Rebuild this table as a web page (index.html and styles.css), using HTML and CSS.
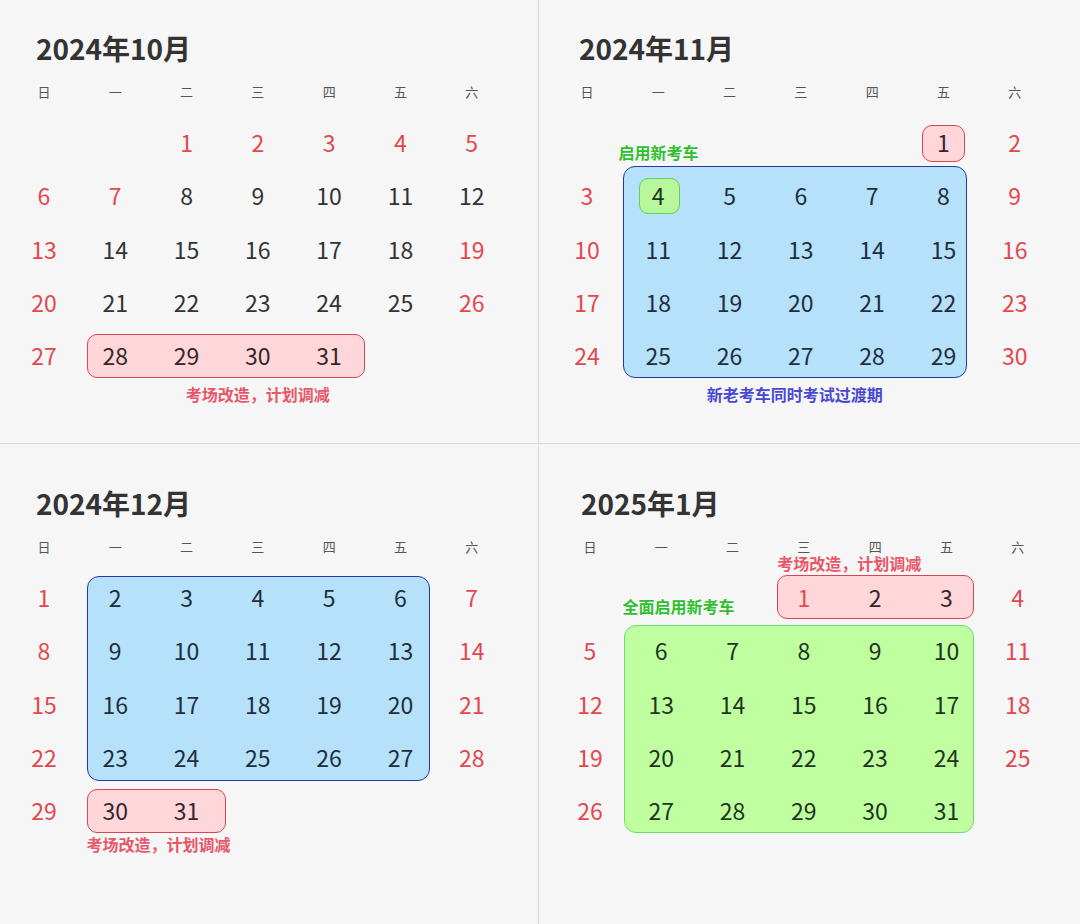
FILE: index.html
```html
<!DOCTYPE html>
<html lang="zh-CN">
<head>
<meta charset="utf-8">
<title>考试日历</title>
<link rel="stylesheet" href="styles.css">
</head>
<body>
<div class="board">
  <section class="month tl left top">
    <h2 class="title">2024年10月</h2>
    <div class="cal">
      <span class="wd">日</span><span class="wd">一</span><span class="wd">二</span><span class="wd">三</span><span class="wd">四</span><span class="wd">五</span><span class="wd">六</span>
      <span class="d r c3">1</span><span class="d r">2</span><span class="d r">3</span><span class="d r">4</span><span class="d r">5</span>
      <span class="d r">6</span><span class="d r">7</span><span class="d">8</span><span class="d">9</span><span class="d">10</span><span class="d">11</span><span class="d">12</span>
      <span class="d r">13</span><span class="d">14</span><span class="d">15</span><span class="d">16</span><span class="d">17</span><span class="d">18</span><span class="d r">19</span>
      <span class="d r">20</span><span class="d">21</span><span class="d">22</span><span class="d">23</span><span class="d">24</span><span class="d">25</span><span class="d r">26</span>
      <span class="d r">27</span><span class="d p">28</span><span class="d p">29</span><span class="d p">30</span><span class="d p">31</span>
      <div class="hl pink oct-cut"></div>
      <div class="note n-pink oct-note">考场改造，计划调减</div>
    </div>
  </section>

  <section class="month tr top">
    <h2 class="title">2024年11月</h2>
    <div class="cal">
      <span class="wd">日</span><span class="wd">一</span><span class="wd">二</span><span class="wd">三</span><span class="wd">四</span><span class="wd">五</span><span class="wd">六</span>
      <span class="d p c6">1</span><span class="d r">2</span>
      <span class="d r">3</span><span class="d g">4</span><span class="d b">5</span><span class="d b">6</span><span class="d b">7</span><span class="d b">8</span><span class="d r">9</span>
      <span class="d r">10</span><span class="d b">11</span><span class="d b">12</span><span class="d b">13</span><span class="d b">14</span><span class="d b">15</span><span class="d r">16</span>
      <span class="d r">17</span><span class="d b">18</span><span class="d b">19</span><span class="d b">20</span><span class="d b">21</span><span class="d b">22</span><span class="d r">23</span>
      <span class="d r">24</span><span class="d b">25</span><span class="d b">26</span><span class="d b">27</span><span class="d b">28</span><span class="d b">29</span><span class="d r">30</span>
      <div class="hl pink nov-one"></div>
      <div class="hl blue nov-blue"></div>
      <div class="hl green nov-four"></div>
      <div class="note n-green nov-start">启用新考车</div>
      <div class="note n-blue nov-trans">新老考车同时考试过渡期</div>
    </div>
  </section>

  <section class="month bl left">
    <h2 class="title">2024年12月</h2>
    <div class="cal">
      <span class="wd">日</span><span class="wd">一</span><span class="wd">二</span><span class="wd">三</span><span class="wd">四</span><span class="wd">五</span><span class="wd">六</span>
      <span class="d r">1</span><span class="d b">2</span><span class="d b">3</span><span class="d b">4</span><span class="d b">5</span><span class="d b">6</span><span class="d r">7</span>
      <span class="d r">8</span><span class="d b">9</span><span class="d b">10</span><span class="d b">11</span><span class="d b">12</span><span class="d b">13</span><span class="d r">14</span>
      <span class="d r">15</span><span class="d b">16</span><span class="d b">17</span><span class="d b">18</span><span class="d b">19</span><span class="d b">20</span><span class="d r">21</span>
      <span class="d r">22</span><span class="d b">23</span><span class="d b">24</span><span class="d b">25</span><span class="d b">26</span><span class="d b">27</span><span class="d r">28</span>
      <span class="d r">29</span><span class="d p">30</span><span class="d p">31</span>
      <div class="hl blue dec-blue"></div>
      <div class="hl pink dec-cut"></div>
      <div class="note n-pink dec-note">考场改造，计划调减</div>
    </div>
  </section>

  <section class="month br">
    <h2 class="title">2025年1月</h2>
    <div class="cal">
      <span class="wd">日</span><span class="wd">一</span><span class="wd">二</span><span class="wd">三</span><span class="wd">四</span><span class="wd">五</span><span class="wd">六</span>
      <span class="d r c4">1</span><span class="d p">2</span><span class="d p">3</span><span class="d r">4</span>
      <span class="d r">5</span><span class="d g">6</span><span class="d g">7</span><span class="d g">8</span><span class="d g">9</span><span class="d g">10</span><span class="d r">11</span>
      <span class="d r">12</span><span class="d g">13</span><span class="d g">14</span><span class="d g">15</span><span class="d g">16</span><span class="d g">17</span><span class="d r">18</span>
      <span class="d r">19</span><span class="d g">20</span><span class="d g">21</span><span class="d g">22</span><span class="d g">23</span><span class="d g">24</span><span class="d r">25</span>
      <span class="d r">26</span><span class="d g">27</span><span class="d g">28</span><span class="d g">29</span><span class="d g">30</span><span class="d g">31</span>
      <div class="hl pink jan-cut"></div>
      <div class="hl green jan-green"></div>
      <div class="note n-pink jan-note">考场改造，计划调减</div>
      <div class="note n-green jan-start">全面启用新考车</div>
    </div>
  </section>
</div>
</body>
</html>
```
FILE: styles.css
```css
* { box-sizing: border-box; }

body {
  margin: 0;
  background: #f6f6f6;
  font-family: "Noto Sans CJK SC", "Noto Sans", sans-serif;
}

.board {
  width: 1080px;
  height: 924px;
  display: grid;
  grid-template-columns: 539px 541px;
  grid-template-rows: 444px 480px;
  background: #f6f6f6;
}

.month {
  padding-top: var(--ty);
}
.month.left { border-right: 1px solid #d9d9d9; }
.month.top { border-bottom: 1px solid #d9d9d9; }

.tl { --ty: 30px; --tx: 36px; --gx: 8.3px; }
.tr { --ty: 30px; --tx: 40px; --gx: 12.3px; }
.bl { --ty: 41px; --tx: 36px; --gx: 8.3px; }
.br { --ty: 41px; --tx: 42px; --gx: 15.3px; }

.title {
  margin: 0 0 14.4px var(--tx);
  font-size: 28px;
  line-height: 36px;
  font-weight: 700;
  color: #333;
}

.cal {
  position: relative;
  display: grid;
  grid-template-columns: repeat(7, 71.3px);
  grid-template-rows: 36px repeat(5, 53.3px);
  margin-left: var(--gx);
  width: max-content;
}

.wd {
  font-size: 13px;
  line-height: 24px;
  color: #555;
  text-align: center;
}

.d {
  position: relative;
  z-index: 1;
  display: flex;
  align-items: center;
  justify-content: center;
  padding-bottom: 2px;
  font-size: 23px;
  color: #333;
}
.d.r { color: #e2484e; }
.d.b { color: #1f2d3c; }
.d.g { color: #1e3421; }
.d.p { color: #352729; }
.d.r.p { color: #e2484e; }

.c3 { grid-column-start: 3; }
.c4 { grid-column-start: 4; }
.c6 { grid-column-start: 6; }

.hl {
  position: absolute;
  z-index: 0;
  border: 1px solid;
  border-radius: 10px;
}
.pink { background: #ffd6da; border-color: #d6474f; }
.blue { background: #b5e1fb; border-color: #2a35ae; border-radius: 12px; }
.green { background: #bfff9f; border-color: #6cdb6c; border-radius: 12px; }

.oct-cut   { grid-column: 2 / 6; grid-row: 6 / 7; inset: 4px 0 5px 7px; }
.nov-one   { grid-column: 6 / 7; grid-row: 2 / 3; inset: 9px 14px 8px 14px; }
.nov-blue  { grid-column: 2 / 7; grid-row: 3 / 7; inset: -4px 12px 5px 0; }
.nov-four  { grid-column: 2 / 3; grid-row: 3 / 4; inset: 8px 14px 9px 16px; background: #b8f79c; border-color: #62d062; border-radius: 9px; }
.dec-blue  { grid-column: 2 / 7; grid-row: 2 / 6; inset: 5px 6px 4px 7px; }
.dec-cut   { grid-column: 2 / 4; grid-row: 6 / 7; inset: 4px -4px 5px 7px; }
.jan-cut   { grid-column: 4 / 7; grid-row: 2 / 3; inset: 4px 8px 6px 9px; }
.jan-green { grid-column: 2 / 7; grid-row: 3 / 7; inset: 0 8px 5px -2px; }

.note {
  position: absolute;
  z-index: 1;
  font-size: 16px;
  line-height: 20px;
  font-weight: 700;
  white-space: nowrap;
}
.n-pink { color: #e8566a; }
.n-green { color: #2fbf2f; }
.n-blue { color: #4a48d2; }

.oct-note  { grid-column: 3 / 6; grid-row: 6 / 7; left: 0; right: 0; top: calc(100% + 1px); text-align: center; }
.nov-start { grid-column: 2 / 3; grid-row: 2 / 3; left: -4px; bottom: 8px; }
.nov-trans { grid-column: 2 / 7; grid-row: 6 / 7; left: 0; right: 12px; top: calc(100% + 1px); text-align: center; }
.dec-note  { grid-column: 2 / 4; grid-row: 6 / 7; left: 7px; top: calc(100% - 4px); }
.jan-note  { grid-column: 4 / 7; grid-row: 2 / 3; left: 9px; top: -18px; }
.jan-start { grid-column: 2 / 3; grid-row: 2 / 3; left: -3px; top: 25px; }
```
